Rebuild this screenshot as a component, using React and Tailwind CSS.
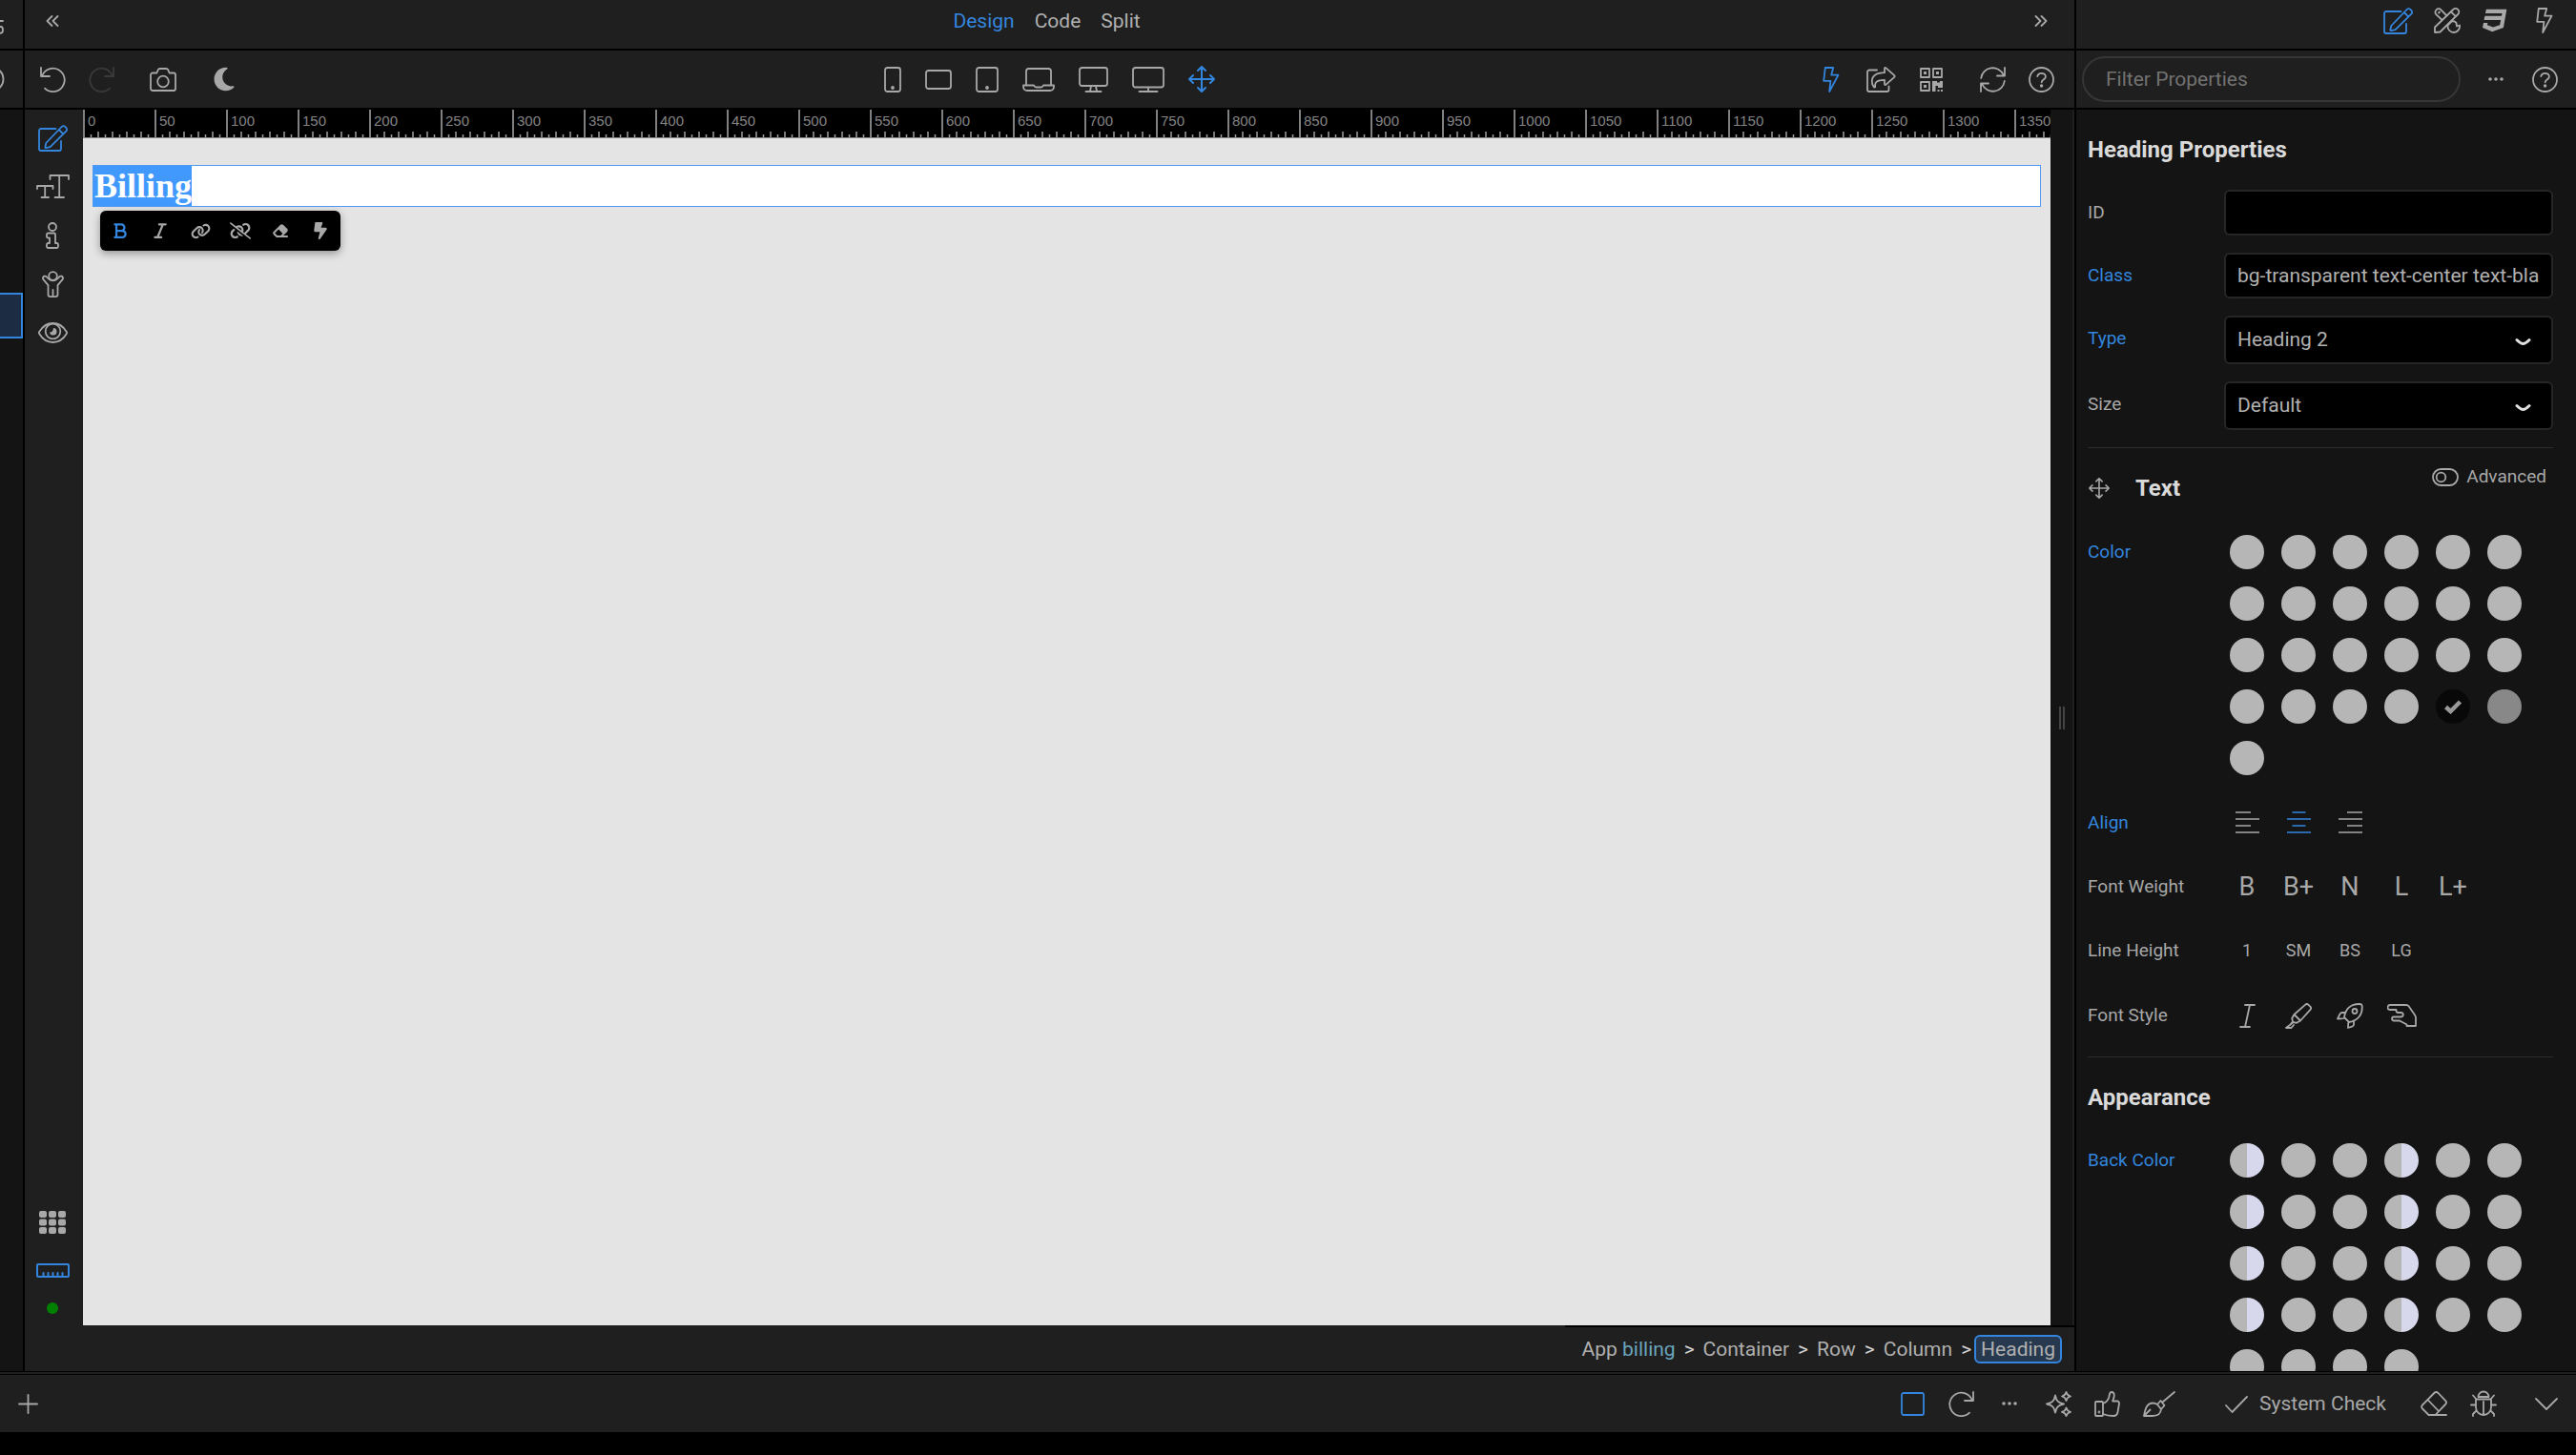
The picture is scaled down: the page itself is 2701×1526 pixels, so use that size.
import React from "react";
import {
  FaBold,
  FaItalic,
  FaLink,
  FaLinkSlash,
  FaEraser,
  FaBoltLightning,
  FaMoon,
} from "react-icons/fa6";
import { FaCss3 } from "react-icons/fa";

function Icon({ w, h, sw = 1.8, children }) {
  return (
    <svg
      width={w}
      height={h}
      viewBox={`0 0 ${w} ${h}`}
      fill="none"
      stroke="currentColor"
      strokeWidth={sw}
      strokeLinecap="round"
      strokeLinejoin="round"
      className="shrink-0"
      aria-hidden="true"
    >
      {children}
    </svg>
  );
}

const EditIcon = () => (
  <Icon w={31} h={28}>
    <path d="M18.5 4H3a2 2 0 0 0-2 2v19a2 2 0 0 0 2 2h19a2 2 0 0 0 2-2v-8" />
    <path d="M8.3 19 24.6 2a2.6 2.6 0 0 1 3.8 0l.9.9a2.6 2.6 0 0 1 0 3.8L12.6 23.2l-4.3 1c-.6.1-1-.3-.9-.9zM21.8 5l4.6 4.6" />
  </Icon>
);
const HelpIcon = () => (
  <Icon w={27} h={27}>
    <circle cx="13.5" cy="13.5" r="12.5" />
    <path d="M9.3 10.2c.3-2 2-3.4 4.3-3.4 2.4 0 4.3 1.5 4.3 3.6 0 3-4.2 3.1-4.2 5.9" />
    <circle cx="13.6" cy="20" r="1.1" fill="currentColor" stroke="none" />
    <circle cx="13.6" cy="20" r="0.8" />
  </Icon>
);
const BoltIcon = ({ h = 27 }) => (
  <Icon w={18} h={h}>
    <path d="M2.8 1h8.4L9.2 8.6h7.3L7.2 26l1.2-11.2H1.2z" />
  </Icon>
);
const UndoIcon = () => (
  <Icon w={27} h={27}>
    <path d="M1 1v9h9M2.2 9.4A12.2 12.2 0 1 1 5 22.6" />
  </Icon>
);
const RedoIcon = () => (
  <Icon w={27} h={27}>
    <path d="M26 1v9h-9M24.8 9.4A12.2 12.2 0 1 0 22 22.6" />
  </Icon>
);
const CameraIcon = () => (
  <Icon w={28} h={25}>
    <path d="M3 5.5h4.4L8.8 2.2A2 2 0 0 1 10.6 1h6.8a2 2 0 0 1 1.8 1.2l1.4 3.3H25a2 2 0 0 1 2 2V22a2 2 0 0 1-2 2H3a2 2 0 0 1-2-2V7.5a2 2 0 0 1 2-2z" />
    <circle cx="14" cy="14.5" r="5.8" />
  </Icon>
);
const MoveIcon = ({ size = 28, sw = 2 }) => (
  <svg
    width={size}
    height={size}
    viewBox="0 0 28 28"
    fill="none"
    stroke="currentColor"
    strokeWidth={sw}
    strokeLinecap="round"
    strokeLinejoin="round"
    aria-hidden="true"
  >
    <path d="M14 1.5v25M1.5 14h25M10 5l4-4 4 4M10 23l4 4 4-4M5 10l-4 4 4 4M23 10l4 4-4 4" />
  </svg>
);
const DotsIcon = () => (
  <Icon w={16} h={4}>
    <g fill="currentColor" stroke="none">
      <circle cx="2" cy="2" r="1.8" />
      <circle cx="8" cy="2" r="1.8" />
      <circle cx="14" cy="2" r="1.8" />
    </g>
  </Icon>
);

const PhoneIcon = () => (
  <Icon w={18} h={27}>
    <rect x="1" y="1" width="16" height="25" rx="2.5" />
    <circle cx="9" cy="22" r="1" fill="currentColor" />
  </Icon>
);
const TabletWideIcon = () => (
  <Icon w={28} h={21}>
    <rect x="1" y="1" width="26" height="19" rx="2.5" />
  </Icon>
);
const TabletIcon = () => (
  <Icon w={24} h={27}>
    <rect x="1" y="1" width="22" height="25" rx="2.5" />
    <circle cx="12" cy="22" r="1" fill="currentColor" />
  </Icon>
);
const LaptopIcon = () => (
  <Icon w={34} h={25}>
    <path d="M4 18V3.5A2.5 2.5 0 0 1 6.5 1h21A2.5 2.5 0 0 1 30 3.5V18" />
    <path d="M1 18.5h11c.5 1.2 1.2 2 2.5 2h5c1.3 0 2-.8 2.5-2h11v1.5a4 4 0 0 1-4 4H5a4 4 0 0 1-4-4z" />
  </Icon>
);
const MonitorIcon = () => (
  <Icon w={31} h={27}>
    <rect x="1" y="1" width="29" height="19" rx="2.5" />
    <path d="m13 20.5-1 5M18 20.5l1 5M7.5 26h16" />
  </Icon>
);
const DesktopIcon = () => (
  <Icon w={34} h={27}>
    <rect x="1" y="1" width="32" height="20.5" rx="2.5" />
    <path d="M17 22v3M7.5 26h19" />
  </Icon>
);

const ShareIcon = () => (
  <Icon w={31} h={27}>
    <path d="M11 3.5H3a2 2 0 0 0-2 2V24a2 2 0 0 0 2 2h18.5a2 2 0 0 0 2-2v-3.5" />
    <path d="M19 1.8v4.4C10.5 6.4 5.8 9.5 5.8 15.5c0 2.5.8 4.3 2 5.8.6.7 1.6.2 1.4-.7-.8-4.8 2.3-6.6 9.8-6.8v4.5c0 .7.8 1 1.3.6l9-8c.5-.5.5-1.2 0-1.7l-9-8c-.5-.5-1.3-.1-1.3.6z" />
  </Icon>
);
const QrIcon = () => (
  <Icon w={24} h={25}>
    <rect x="1" y="1" width="9" height="9" />
    <rect x="14" y="1" width="9" height="9" />
    <rect x="1" y="15" width="9" height="9" />
    <g fill="currentColor" stroke="none">
      <path d="M4 4h3v3H4zM17 4h3v3h-3zM4 18h3v3H4z" />
      <path d="M13 14h5v1.5h3V14h3v7h-5v-2h-2.5v6H13zM18.5 23h2v2h-2zM22 23h2v2h-2z" />
    </g>
  </Icon>
);
const SyncIcon = () => (
  <Icon w={27} h={27}>
    <path d="M26 1v8.5h-8M1 26v-8.5h8M1.2 12A12.3 12.3 0 0 1 24.6 8.5M25.8 15A12.3 12.3 0 0 1 2.4 18.5" />
  </Icon>
);
const ToolsIcon = () => (
  <Icon w={28} h={27}>
    <path d="m13.5 8.5-6-6.2a3.4 3.4 0 0 0-5 0 3.4 3.4 0 0 0 0 5L8.7 13M14.5 18.5l4-4c2.2-.6 4 .2 5 1.5l.5 3.5 3-1a6.5 6.5 0 0 1-6 7.5c-4 0-7-3.5-6.5-7.5" />
    <path d="M1 26v-5.5L20.2 2a3.4 3.4 0 0 1 5 0 3.4 3.4 0 0 1 0 5L6.5 25.5zM18 4.3l5 5M6 4.5l-1 1" />
  </Icon>
);

const TextSizeIcon = () => (
  <Icon w={35} h={25}>
    <path d="M14.5 5V1H34v4M24.2 1v23M19.5 24h9.5M1 15v-3h16.5v3M9.2 12v12M5.5 24h7.5" />
  </Icon>
);
const InfoIcon = () => (
  <Icon w={14} h={28}>
    <circle cx="7" cy="5" r="4" />
    <path d="M2.5 11.5H8.5a1.5 1.5 0 0 1 1.5 1.5v9h1.5a1.5 1.5 0 0 1 1.5 1.5V25.5a1.5 1.5 0 0 1-1.5 1.5h-9A1.5 1.5 0 0 1 1 25.5V23.5A1.5 1.5 0 0 1 2.5 22H4v-5.5H2.5A1.5 1.5 0 0 1 1 15v-2a1.5 1.5 0 0 1 1.5-1.5z" />
  </Icon>
);
const PersonIcon = () => (
  <Icon w={23} h={28}>
    <circle cx="11.5" cy="5.5" r="4.3" />
    <path d="M3.3 5.5a2.2 2.2 0 0 0-1.8 3.6l5 6v10a2 2 0 0 0 2 2h6a2 2 0 0 0 2-2v-10l5-6a2.2 2.2 0 0 0-1.8-3.6c-1.4 0-1.8 1.2-3 2.5a7 7 0 0 1-10.4 0c-1.2-1.3-1.6-2.5-3-2.500zM11.5 20v7" />
  </Icon>
);
const EyeIcon = () => (
  <Icon w={31} h={22}>
    <path d="M1.2 12a2 2 0 0 1 0-2C4.500 4.500 9.500 1 15.500 1s11 3.500 14.300 9a2 2 0 0 1 0 2c-3.300 5.500-8.300 9-14.300 9S4.500 17.500 1.200 12z" />
    <circle cx="15.5" cy="9.5" r="7.8" />
    <path d="M16 6a3.8 3.8 0 1 1-4 4.500c2 .5 4-1.500 4-4.500z" fill="currentColor" stroke="none" />
  </Icon>
);
const GridIcon = () => (
  <Icon w={28} h={24}>
    <g fill="currentColor" stroke="none">
      {[0, 10, 20].map((x) =>
        [0, 8.5, 17].map((y) => <rect key={`${x}-${y}`} x={x} y={y} width="8" height="7" rx="2" />)
      )}
    </g>
  </Icon>
);
const RulerIcon = () => (
  <Icon w={35} h={15} sw={2}>
    <rect x="1" y="1" width="33" height="13" rx="1" />
    <path d="M7.5 10v3M12.500 10v3M17.500 10v3M22.500 10v3M27.500 10v3" />
  </Icon>
);

const SparklesIcon = () => (
  <Icon w={27} h={27}>
    <path d="M10 4.5c1 5.500 3 8 9 9-6 1-8 3.500-9 9-1-5.500-3-8-9-9 6-1 8-3.500 9-9zM21.500 1c.6 2.600 1.700 3.800 4.500 4.500-2.800.7-3.900 1.900-4.500 4.500-.6-2.600-1.700-3.800-4.500-4.500 2.800-.7 3.900-1.900 4.500-4.500zM21.500 17.500c.6 2.600 1.700 3.600 4.500 4.300-2.800.7-3.900 1.700-4.500 4.200-.6-2.500-1.700-3.500-4.500-4.200 2.800-.7 3.900-1.700 4.500-4.300z" />
  </Icon>
);
const ThumbIcon = () => (
  <Icon w={27} h={27}>
    <rect x="1" y="11" width="8" height="15" rx="1" />
    <path d="M9 13c3-1 5.500-4 6.300-6.500C15.800 4.500 15.500 1 18 1c2 0 2.800 1.800 2.800 3.700 0 2.300-1.300 3.800-1.600 5.800H24c1.300 0 2.200 1.200 2 2.500l-1.500 9c-.5 3-1.500 4-4.500 4-5 0-7.500-.5-11-2" />
    <circle cx="5" cy="22" r=".5" />
  </Icon>
);
const BrushIcon = () => (
  <Icon w={34} h={27}>
    <path d="M33 1 20.500 11.500M1 26c1-6 2.500-13.500 9.500-13.500 1.500 0 3 .5 4.500 1.500l4 5C18.500 24 14.500 26 10 26zM15 14l3.500-4 4 5-3.500 4M1 26l6.500-6.500" />
  </Icon>
);
const CheckIcon = () => (
  <Icon w={24} h={18}>
    <path d="m1 10 6.500 7L23 1" />
  </Icon>
);
const EraserIcon = () => (
  <Icon w={28} h={26}>
    <path d="M27 25H8.500L2 18.500a3 3 0 0 1 0-4L14.300 2a3 3 0 0 1 4.200 0L26 9.800a3 3 0 0 1 0 4.200L15.500 25M7.500 9l11.500 12" />
  </Icon>
);
const BugIcon = () => (
  <Icon w={28} h={28}>
    <path d="M8.500 7a5.500 5.500 0 0 1 11 0zM6 9.500h16V18a8 8 0 0 1-16 0zM14 12v14M1 15.500h5M22 15.500h5M3 5.500l3.500 4M25 5.500l-3.500 4M3 27v-2l3.500-3.500M25 27v-2l-3.500-3.500" />
  </Icon>
);
const ChevronDownIcon = () => (
  <Icon w={24} h={13}>
    <path d="m1 1 11 11L23 1" />
  </Icon>
);
const ThickCheckIcon = () => (
  <Icon w={20} h={16} sw={4.5}>
    <path d="m2.500 8.500 5 4.500L17.500 3" strokeLinecap="butt" strokeLinejoin="miter" />
  </Icon>
);

const AlignIcon = ({ d }) => (
  <Icon w={25} h={23} sw={1.5}>
    <path d={d} strokeLinecap="butt" />
  </Icon>
);
const ItalicIcon = () => (
  <Icon w={17} h={25}>
    <path d="M6 1h10M1 24h10M11 1 6 24" />
  </Icon>
);
const MarkerIcon = () => (
  <Icon w={28} h={27}>
    <path d="M9.500 12 21 1.800a2.500 2.500 0 0 1 3.500 0l1.800 1.800a2.500 2.500 0 0 1 0 3.500L16 18.500zM9.500 12l-2.300 4 .8 3.500-3 3.500M16 18.500l-4 2.300-3.500-.8L5 23l-4 3h5.500l2.500-3M9.500 12l6.500 6.500" />
  </Icon>
);
const RocketIcon = () => (
  <Icon w={28} h={27}>
    <path d="M8 15C9 7 14 1 24 1c1.500 0 2.300.3 2.500 1.200C28 12 22 18.500 13 20zM9.500 10H5.800c-1 0-1.700.4-2.100 1.200L1 16.500c2 0 4.500 0 6.500-.5M18 18.500v3.700c0 1-.4 1.700-1.200 2.100L12 26c0-2 0-4 .5-6" />
    <circle cx="19" cy="8.500" r="2.500" />
  </Icon>
);
const HandIcon = () => (
  <Icon w={31} h={24}>
    <path d="M3 1h17c1 0 2 .5 2.600 1.300L29 11.500c.6.900 1 1.800 1 3V23H20.500v-1.500L13 17.500H7a2 2 0 0 1-2-2c0-1.200 1-2 2-2h7c2 0 2.800-1 2.800-2.500S15.500 9 14 9h-2.500a2 2 0 0 1-2-2V6H3a2.500 2.500 0 0 1 0-5z" />
  </Icon>
);

function IconButton({ label, active, dim, className = "", children }) {
  const tone = active ? "text-[#3385de]" : dim ? "text-[#3a3a3a]" : "text-[#a8a8a8]";
  return (
    <button type="button" aria-label={label} className={`flex items-center justify-center ${tone} ${className}`}>
      {children}
    </button>
  );
}

function LeftStrip() {
  return (
    <aside className="flex w-[26px] shrink-0 flex-col border-r-2 border-black bg-[#141414]">
      <div className="h-[53px] border-b-2 border-black bg-[#1f1f1f] pt-5 text-[#a8a8a8]">
        <Icon w={5} h={17}>
          <path d="M-2 2h5M-1 8h2c2 0 2 2 2 4s-1 3-4 3" />
        </Icon>
      </div>
      <div className="flex h-[62px] items-center border-b-2 border-black bg-[#1f1f1f] text-[#a8a8a8]">
        <Icon w={5} h={28}>
          <circle cx="-9" cy="14" r="12.500" />
        </Icon>
      </div>
      <div className="mt-48 h-12 border-2 border-l-0 border-[#3385de] bg-[#1c2c42]" />
    </aside>
  );
}

function TopBar() {
  return (
    <div className="grid h-[53px] grid-cols-[1fr_auto_1fr] items-center border-b-2 border-black bg-[#1f1f1f] pb-2 pl-[22px] pr-7">
      <IconButton label="Collapse left" className="justify-self-start">
        <Icon w={14} h={12}>
          <path d="M6.500 1 1.500 6l5 5M12.500 1l-5 5 5 5" />
        </Icon>
      </IconButton>
      <nav className="flex gap-[21px] text-[21px] leading-7 text-[#b0b0b0]">
        <button type="button" className="text-[#3385de]">Design</button>
        <button type="button">Code</button>
        <button type="button">Split</button>
      </nav>
      <IconButton label="Collapse right" className="justify-self-end">
        <Icon w={14} h={12}>
          <path d="m1.500 1 5 5-5 5M7.500 1l5 5-5 5" />
        </Icon>
      </IconButton>
    </div>
  );
}

function ToolBar() {
  return (
    <div className="grid h-[62px] grid-cols-[1fr_auto_1fr] items-center border-b-2 border-black bg-[#1f1f1f] pl-4 pr-[21px]">
      <div className="flex items-center">
        <IconButton label="Undo"><UndoIcon /></IconButton>
        <IconButton label="Redo" dim className="ml-6"><RedoIcon /></IconButton>
        <IconButton label="Screenshot" className="ml-[37px]"><CameraIcon /></IconButton>
        <IconButton label="Dark mode" className="ml-9"><FaMoon size={28} /></IconButton>
      </div>
      <div className="flex items-center gap-[25px] pl-1">
        <IconButton label="Phone"><PhoneIcon /></IconButton>
        <IconButton label="Phone landscape"><TabletWideIcon /></IconButton>
        <IconButton label="Tablet"><TabletIcon /></IconButton>
        <IconButton label="Laptop"><LaptopIcon /></IconButton>
        <IconButton label="Monitor"><MonitorIcon /></IconButton>
        <IconButton label="Large desktop"><DesktopIcon /></IconButton>
        <IconButton label="Fluid" active><MoveIcon /></IconButton>
      </div>
      <div className="flex items-center justify-end">
        <IconButton label="Actions" active><BoltIcon /></IconButton>
        <IconButton label="Share" className="ml-7"><ShareIcon /></IconButton>
        <IconButton label="QR code" className="ml-[25px]"><QrIcon /></IconButton>
        <IconButton label="Refresh" className="ml-[39px]"><SyncIcon /></IconButton>
        <IconButton label="Help" className="ml-6"><HelpIcon /></IconButton>
      </div>
    </div>
  );
}

function Rail() {
  return (
    <div className="flex w-[61px] shrink-0 flex-col items-center bg-[#1f1f1f] pr-[3px] pt-1">
      <IconButton label="Edit" active className="h-[51px]"><EditIcon /></IconButton>
      <IconButton label="Typography" className="h-[51px]"><TextSizeIcon /></IconButton>
      <IconButton label="Info" className="h-[51px]"><InfoIcon /></IconButton>
      <IconButton label="Accessibility" className="h-[51px]"><PersonIcon /></IconButton>
      <IconButton label="Preview" className="h-[51px]"><EyeIcon /></IconButton>
      <IconButton label="Grid" className="mt-auto h-[51px]"><GridIcon /></IconButton>
      <IconButton label="Ruler" active className="h-[51px]"><RulerIcon /></IconButton>
      <span className="mb-[60px] mt-2 size-3 rounded-full bg-[#008000]" />
    </div>
  );
}

const RULER = Array.from({ length: 28 }, (_, i) => i * 50);

function Ruler() {
  return (
    <div className="flex h-[30px] overflow-hidden border-b border-[#8a8a8a] bg-black">
      {RULER.map((n) => (
        <div key={n} className="flex w-[75px] shrink-0 flex-col justify-between border-l-2 border-[#808080]">
          <span className="pl-[3px] pt-[3px] font-['Liberation_Sans',sans-serif] text-[15px] leading-[18px] text-[#848484]">{n}</span>
          <svg width="73" height="7" viewBox="0 0 73 7" stroke="#a0a0a0" strokeWidth="1.5" aria-hidden="true">
            <path d="M6.500 4v3M14 1v6M21.500 4v3M29 1v6M36.500 4v3M44 1v6M51.500 4v3M59 1v6M66.500 4v3" />
          </svg>
        </div>
      ))}
    </div>
  );
}

function Canvas() {
  return (
    <div className="flex min-w-0 flex-1 flex-col bg-[#e4e4e4]">
      <Ruler />
      <div className="px-[10px] pt-7">
        <h2 className="flex border border-[#4f9bf2] bg-white font-['Liberation_Serif',serif] text-[36px] font-bold leading-[42px] text-white">
          <span className="bg-[#4199fd] pl-px">Billing</span>
        </h2>
        <div className="ml-2 mt-1 inline-flex h-[42px] rounded-md bg-black shadow-[0_3px_8px_rgba(0,0,0,0.35)]">
          <IconButton label="Bold" active className="w-[42px]"><FaBold size={18} /></IconButton>
          <IconButton label="Italic" className="w-[42px]"><FaItalic size={18} /></IconButton>
          <IconButton label="Link" className="w-[42px]"><FaLink size={21} /></IconButton>
          <IconButton label="Unlink" className="w-[42px]"><FaLinkSlash size={22} /></IconButton>
          <IconButton label="Clear format" className="w-[42px]"><FaEraser size={18} /></IconButton>
          <IconButton label="Dynamic" className="w-[42px]"><FaBoltLightning size={18} /></IconButton>
        </div>
      </div>
    </div>
  );
}

function Breadcrumb() {
  const sep = <span className="text-[#d4d4d4]">&gt;</span>;
  return (
    <div className="flex h-12 shrink-0 justify-end bg-[#1f1f1f]">
      <nav aria-label="Breadcrumb" className="flex items-center gap-[9px] border-t-2 border-black pl-[18px] pr-[13px] text-[21px] leading-6 text-[#b0b0b0]">
        <a href="#app">App <span className="text-[#6aa5bd]">billing</span></a>
        {sep}
        <a href="#container">Container</a>
        {sep}
        <a href="#row">Row</a>
        {sep}
        <a href="#column">Column</a>
        <span className="flex items-center gap-[3px]">
          {sep}
          <a href="#heading" className="rounded-md border-2 border-[#3385de] bg-[#27394f] px-[5px] leading-[26px]">Heading</a>
        </span>
      </nav>
    </div>
  );
}

const inputClass = "w-full rounded-md border-2 border-[#262626] bg-black pl-3 text-[21px] text-[#b0b0b0]";

function Row({ label, active, htmlFor, tall, className = "items-start", children }) {
  const tone = active ? "text-[#3385de]" : "text-[#a8a8a8]";
  const leading = tall ? "leading-[48px]" : "leading-9";
  return (
    <div className={`grid grid-cols-[143px_1fr] ${className}`}>
      {htmlFor ? (
        <label htmlFor={htmlFor} className={`text-[19px] ${leading} ${tone}`}>{label}</label>
      ) : (
        <span className={`text-[19px] ${leading} ${tone}`}>{label}</span>
      )}
      {children}
    </div>
  );
}

function SelectBox({ id, options }) {
  return (
    <div className="relative">
      <select id={id} className={`${inputClass} h-[51px] appearance-none`}>
        {options.map((o) => <option key={o}>{o}</option>)}
      </select>
      <span className="pointer-events-none absolute inset-y-0 right-[23px] flex items-center pt-1 text-[#e0e0e0]">
        <Icon w={17} h={9} sw={3}>
          <path d="M2 2.500c3 3 5 4 6.500 4s3.500-1 6.500-4" />
        </Icon>
      </span>
    </div>
  );
}

const Cells = ({ className = "", children }) => (
  <div className={`ml-[6px] grid grid-cols-[repeat(6,36px)] gap-[18px] ${className}`}>{children}</div>
);

function ColorSwatches() {
  return (
    <Cells>
      {Array.from({ length: 25 }, (_, i) => {
        const selected = i === 22;
        const tone = selected ? "bg-[#080808]" : i === 23 ? "bg-[#888888]" : "bg-[#b6b6b6]";
        return (
          <button
            key={i}
            type="button"
            aria-label={`Text color ${i + 1}`}
            aria-pressed={selected}
            className={`flex size-9 items-center justify-center rounded-full text-[#999999] ${tone}`}
          >
            {selected && <ThickCheckIcon />}
          </button>
        );
      })}
    </Cells>
  );
}

function BackSwatches() {
  return (
    <Cells>
      {Array.from({ length: 28 }, (_, i) => (
        <button
          key={i}
          type="button"
          aria-label={`Back color ${i + 1}`}
          className={`size-9 rounded-full ${
            i < 24 && i % 3 === 0
              ? "bg-[linear-gradient(90deg,#b6b6b6_50%,#d8d8ec_50%)]"
              : "bg-[#b6b6b6]"
          }`}
        />
      ))}
    </Cells>
  );
}

function CellButton({ label, active, className = "", children }) {
  return (
    <button
      type="button"
      aria-label={label}
      className={`flex h-9 items-center justify-center whitespace-nowrap ${active ? "text-[#3385de]" : "text-[#a8a8a8]"} ${className}`}
    >
      {children}
    </button>
  );
}

function RightPanel() {
  return (
    <aside className="flex w-[526px] shrink-0 flex-col border-l-2 border-black bg-[#141414]">
      <div className="flex h-[53px] shrink-0 items-center justify-end border-b-2 border-black bg-[#1f1f1f] pb-2 pr-6">
        <IconButton label="Properties" active><EditIcon /></IconButton>
        <IconButton label="Design tools" className="ml-[22px]"><ToolsIcon /></IconButton>
        <IconButton label="Styles" className="ml-[23px]"><FaCss3 size={27} /></IconButton>
        <IconButton label="Dynamic events" className="ml-[29px]"><BoltIcon /></IconButton>
      </div>
      <div className="flex h-[62px] shrink-0 items-center border-b-2 border-black bg-[#1f1f1f] pl-1.5 pr-[19px]">
        <input
          type="text"
          aria-label="Filter Properties"
          placeholder="Filter Properties"
          className="h-12 w-[397px] rounded-full border-2 border-[#363636] bg-transparent px-[23px] text-[21px] text-[#b0b0b0] placeholder:text-[#727272]"
        />
        <IconButton label="More" className="ml-auto"><DotsIcon /></IconButton>
        <IconButton label="Panel help" className="ml-[30px]"><HelpIcon /></IconButton>
      </div>
      <div className="min-h-0 flex-1 overflow-hidden pl-3 pr-6 pt-[26px]">
        <h3 className="text-[24px] font-bold leading-8 text-[#dadada]">Heading Properties</h3>
        <div className="mt-[26px] flex flex-col gap-[18px]">
          <Row label="ID" tall htmlFor="prop-id">
            <input id="prop-id" type="text" className={`${inputClass} h-12 pr-3`} />
          </Row>
          <Row label="Class" tall active htmlFor="prop-class">
            <input id="prop-class" type="text" defaultValue="bg-transparent text-center text-black" className={`${inputClass} h-12 pr-3`} />
          </Row>
          <Row label="Type" tall active htmlFor="prop-type">
            <SelectBox id="prop-type" options={["Heading 2", "Heading 1", "Heading 3"]} />
          </Row>
          <Row label="Size" tall htmlFor="prop-size">
            <SelectBox id="prop-size" options={["Default", "Small", "Large"]} />
          </Row>
        </div>
        <hr className="mt-[18px] border-[#2c2c2c]" />
        <div className="flex h-[91px] items-start">
          <IconButton label="Move section" className="ml-px mt-[31px]"><MoveIcon size={22} sw={2} /></IconButton>
          <h3 className="ml-[27px] mt-[26px] text-[24px] font-bold leading-8 text-[#dadada]">Text</h3>
          <button type="button" className="ml-auto mr-[7px] mt-[14px] flex items-center gap-2 text-[19px] leading-8 text-[#a8a8a8]">
            <Icon w={28} h={19}>
              <rect x="1" y="1" width="26" height="17" rx="8.500" />
              <circle cx="9.500" cy="9.500" r="4.800" />
            </Icon>
            Advanced
          </button>
        </div>
        <Row label="Color" active>
          <ColorSwatches />
        </Row>
        <Row label="Align" active className="mt-4 h-[67px] items-center">
          <Cells>
            <CellButton label="Align left"><AlignIcon d="M0 1h16M0 8h25M0 15h16M0 22h25" /></CellButton>
            <CellButton label="Align center" active><AlignIcon d="M5.500 1h14M0 8h25M5.500 15h14M0 22h25" /></CellButton>
            <CellButton label="Align right"><AlignIcon d="M9 1h16M0 8h25M9 15h16M0 22h25" /></CellButton>
          </Cells>
        </Row>
        <Row label="Font Weight" className="h-[67px] items-center">
          <Cells className="text-[27px] leading-8">
            {["B", "B+", "N", "L", "L+"].map((t) => <CellButton key={t} label={t}>{t}</CellButton>)}
          </Cells>
        </Row>
        <Row label="Line Height" className="h-[68px] items-center">
          <Cells className="text-[18px] leading-8">
            {["1", "SM", "BS", "LG"].map((t) => <CellButton key={t} label={t}>{t}</CellButton>)}
          </Cells>
        </Row>
        <Row label="Font Style" className="h-[68px] items-center">
          <Cells>
            <CellButton label="Italic text"><ItalicIcon /></CellButton>
            <CellButton label="Highlight"><MarkerIcon /></CellButton>
            <CellButton label="Lead"><RocketIcon /></CellButton>
            <CellButton label="Small"><HandIcon /></CellButton>
          </Cells>
        </Row>
        <hr className="mt-[9px] border-[#2c2c2c]" />
        <h3 className="mt-[26px] text-[24px] font-bold leading-8 text-[#dadada]">Appearance</h3>
        <Row label="Back Color" active className="mt-8 items-start">
          <BackSwatches />
        </Row>
      </div>
    </aside>
  );
}

function BottomBar() {
  return (
    <footer className="flex h-16 shrink-0 items-center border-t-4 border-double border-black bg-[#1f1f1f] px-[19px]">
      <IconButton label="Add">
        <Icon w={21} h={21}>
          <path d="M10.500 1v19M1 10.500h19" />
        </Icon>
      </IconButton>
      <IconButton label="Panel view" active className="ml-auto">
        <Icon w={25} h={25}>
          <rect x="1" y="1" width="23" height="23" rx="2" />
        </Icon>
      </IconButton>
      <IconButton label="Redo action" className="ml-[25px]"><RedoIcon /></IconButton>
      <IconButton label="More actions" className="ml-[29px]"><DotsIcon /></IconButton>
      <IconButton label="AI assistant" className="ml-[30px]"><SparklesIcon /></IconButton>
      <IconButton label="Like" className="ml-6"><ThumbIcon /></IconButton>
      <IconButton label="Clean" className="ml-6"><BrushIcon /></IconButton>
      <button type="button" className="ml-[52px] flex items-center gap-3 pt-px text-[21px] text-[#a8a8a8]">
        <CheckIcon />
        System Check
      </button>
      <IconButton label="Erase" className="ml-9"><EraserIcon /></IconButton>
      <IconButton label="Debug" className="ml-6"><BugIcon /></IconButton>
      <IconButton label="Collapse panel" className="ml-10"><ChevronDownIcon /></IconButton>
    </footer>
  );
}

export default function App() {
  return (
    <div className="flex h-screen flex-col overflow-hidden bg-black pb-6 font-['Roboto',sans-serif]">
      <main className="flex min-h-0 flex-1">
        <LeftStrip />
        <section className="flex min-w-0 flex-1 flex-col bg-[#141414]">
          <TopBar />
          <ToolBar />
          <div className="flex min-h-0 flex-1">
            <Rail />
            <div className="flex min-w-0 flex-1 flex-col">
              <div className="flex min-h-0 flex-1">
                <Canvas />
                <div className="flex w-[25px] shrink-0 items-center justify-center gap-0.5 border-r-2 border-[#1f1f1f]">
                  <span className="h-6 w-0.5 bg-[#444444]" />
                  <span className="h-6 w-0.5 bg-[#444444]" />
                </div>
              </div>
              <Breadcrumb />
            </div>
          </div>
        </section>
        <RightPanel />
      </main>
      <BottomBar />
    </div>
  );
}
